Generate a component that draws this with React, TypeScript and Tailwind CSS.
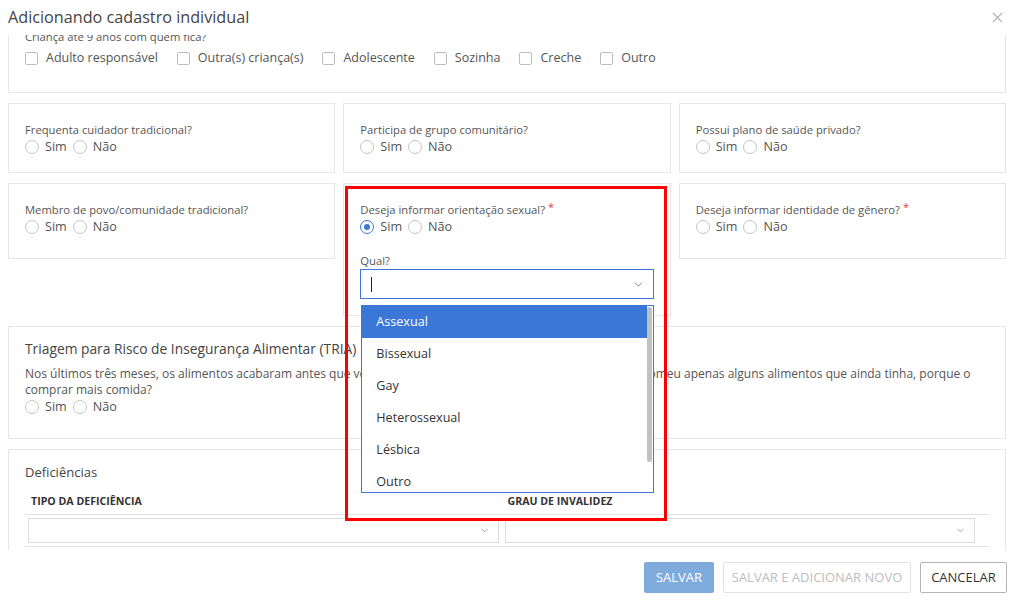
import { ChevronDown, X } from "lucide-react";

const font = { fontFamily: '"Open Sans", "Liberation Sans", sans-serif' };

const Radio = ({ label, checked = false }: { label: string; checked?: boolean }) => (
  <span className="flex items-center gap-[6px] mr-[6px]">
    <span
      className={
        checked
          ? "flex h-[14px] w-[14px] items-center justify-center rounded-full border border-[#3a77d6] bg-white"
          : "h-[14px] w-[14px] rounded-full border border-[#c4c4c4] bg-white"
      }
    >
      {checked && <span className="h-[6px] w-[6px] rounded-full bg-[#3a77d6]" />}
    </span>
    <span className="text-[12.6px] text-[#555]">{label}</span>
  </span>
);

const SimNao = ({ sim = false }: { sim?: boolean }) => (
  <div className="flex items-center h-[18px]">
    <Radio label="Sim" checked={sim} />
    <Radio label="Não" />
  </div>
);

const Check = ({ label }: { label: string }) => (
  <span className="flex items-center gap-[8px] mr-[19px]">
    <span className="h-[13px] w-[13px] rounded-[2px] border border-[#bdbdbd] bg-white" />
    <span className="text-[12.5px] text-[#555]">{label}</span>
  </span>
);

const Label = ({ text, required = false }: { text: string; required?: boolean }) => (
  <div className="text-[11.25px] leading-[17px] text-[#555]">
    {text}
    {required && <span className="ml-[3px] align-top text-[11px] leading-[11px] text-[#e03b3b]">*</span>}
  </div>
);

const YesNoPanel = ({ text, h, pt, required = false }: { text: string; h: string; pt: string; required?: boolean }) => (
  <div className={`border border-[#e6e6e6] bg-white px-4 ${h} ${pt}`}>
    <Label text={text} required={required} />
    <SimNao />
  </div>
);

const options = ["Assexual", "Bissexual", "Gay", "Heterossexual", "Lésbica", "Outro"];

export default function App() {
  return (
    <div className="relative h-[600px] w-[1017px] overflow-hidden bg-white" style={font}>
      {/* header */}
      <div className="flex h-[35px] items-center justify-between pl-2 pr-[11px]">
        <h1 className="text-[16.2px] text-[#444]">Adicionando cadastro individual</h1>
        <X size={17} strokeWidth={1.6} className="text-[#b0b0b0]" />
      </div>

      {/* body */}
      <div className="h-[515px] overflow-hidden pl-2 pr-[11px]">
        <div className="-mt-[9px] flex flex-col gap-[10px]">
          {/* top panel */}
          <div className="h-[67px] border border-[#e6e6e6] border-t-0 px-4 pt-[2px]">
            <Label text="Criança até 9 anos com quem fica?" />
            <div className="mt-[4px] flex items-center">
              <Check label="Adulto responsável" />
              <Check label="Outra(s) criança(s)" />
              <Check label="Adolescente" />
              <Check label="Sozinha" />
              <Check label="Creche" />
              <Check label="Outro" />
            </div>
          </div>

          {/* row 2 */}
          <div className="grid grid-cols-3 gap-2 items-start">
            <YesNoPanel text="Frequenta cuidador tradicional?" h="h-[70px]" pt="pt-[17px]" />
            <YesNoPanel text="Participa de grupo comunitário?" h="h-[70px]" pt="pt-[17px]" />
            <YesNoPanel text="Possui plano de saúde privado?" h="h-[70px]" pt="pt-[17px]" />
          </div>

          {/* row 3 */}
          <div className="grid grid-cols-3 gap-2 items-start">
            <YesNoPanel text="Membro de povo/comunidade tradicional?" h="h-[76px]" pt="pt-[17px]" />
            <div className="relative h-[133px] border border-[#e6e6e6] bg-white px-4 pt-[17px]">
              <Label text="Deseja informar orientação sexual?" required />
              <SimNao sim />
              <div className="mt-[16px] text-[11.25px] leading-[17px] text-[#555]">Qual?</div>
              <div className="flex h-[30px] items-center justify-between border border-[#3a77d6] pl-[10px] pr-[8px]">
                <span className="h-[15px] w-[1px] bg-[#222]" />
                <ChevronDown size={13} strokeWidth={1.5} className="text-[#666]" />
              </div>
              {/* open list */}
              <div className="absolute left-[17px] right-[16px] top-[121px] z-10 h-[188px] overflow-hidden border border-[#3a77d6] bg-white">
                <div className="flex">
                  <div className="flex-1">
                    {options.map((o, i) => (
                      <div
                        key={o}
                        className={
                          i === 0
                            ? "flex h-[32px] items-center bg-[#3a77d6] pl-[14px] text-[12.6px] text-white"
                            : "flex h-[32px] items-center pl-[14px] text-[12.6px] text-[#333]"
                        }
                      >
                        {o}
                      </div>
                    ))}
                  </div>
                  <div className="w-[6px] bg-white pr-[1px]">
                    <div className="mt-[1px] h-[155px] w-[5px] rounded-full bg-[#c1c1c1]" />
                  </div>
                </div>
              </div>
            </div>
            <YesNoPanel text="Deseja informar identidade de gênero?" h="h-[76px]" pt="pt-[17px]" required />
          </div>

          {/* TRIA */}
          <div className="h-[113px] border border-[#e6e6e6] bg-white px-4 pt-[12px]">
            <div className="text-[13.8px] leading-[20px] text-[#444]">Triagem para Risco de Insegurança Alimentar (TRIA)</div>
            <div className="mt-[7px] text-[12px] leading-[16px] text-[#555]">
              Nos últimos três meses, os alimentos acabaram antes que você tivesse dinheiro para comprar a comida? Você comeu apenas alguns alimentos que ainda tinha, porque o comprar mais comida?
            </div>
            <SimNao />
          </div>

          {/* Deficiências */}
          <div className="h-[110px] border border-[#e6e6e6] bg-white px-4 pt-[13px]">
            <div className="text-[13px] leading-[18px] text-[#444]">Deficiências</div>
            <div className="mt-[12px] grid grid-cols-2 gap-[6px] border-b border-[#e3e3e3] pb-[5px] pl-[3px] pr-[14px]">
              <div className="pl-[3px] text-[10.6px] font-bold leading-[16px] text-[#333]">TIPO DA DEFICIÊNCIA</div>
              <div className="pl-[3px] text-[10.6px] font-bold leading-[16px] text-[#333]">GRAU DE INVALIDEZ</div>
            </div>
            <div className="grid grid-cols-2 gap-[6px] border-b border-[#e3e3e3] pb-[3px] pl-[3px] pr-[14px] pt-[3px]">
              <div className="flex h-[25px] items-center justify-end border border-[#dcdcdc] pr-[8px]">
                <ChevronDown size={11} strokeWidth={1.5} className="text-[#777]" />
              </div>
              <div className="flex h-[25px] items-center justify-end border border-[#dcdcdc] pr-[8px]">
                <ChevronDown size={11} strokeWidth={1.5} className="text-[#777]" />
              </div>
            </div>
          </div>
        </div>
      </div>

      {/* footer */}
      <div className="flex h-[50px] items-start justify-end gap-[9px] bg-white pr-[10px] pt-[12px]">
        <button className="h-[31px] w-[70px] rounded-[2px] bg-[#7faadc] text-[13px] text-white">SALVAR</button>
        <button className="h-[31px] w-[188px] rounded-[2px] border border-[#e2e2e2] bg-white text-[13px] text-[#bdbdbd]">
          SALVAR E ADICIONAR NOVO
        </button>
        <button className="h-[31px] w-[87px] rounded-[2px] border border-[#b5b5b5] bg-white text-[13px] text-[#333]">CANCELAR</button>
      </div>

      {/* highlight */}
      <div className="pointer-events-none absolute left-[345px] top-[186px] z-20 h-[335px] w-[322px] border-[3px] border-[#ff0000]" />
    </div>
  );
}
